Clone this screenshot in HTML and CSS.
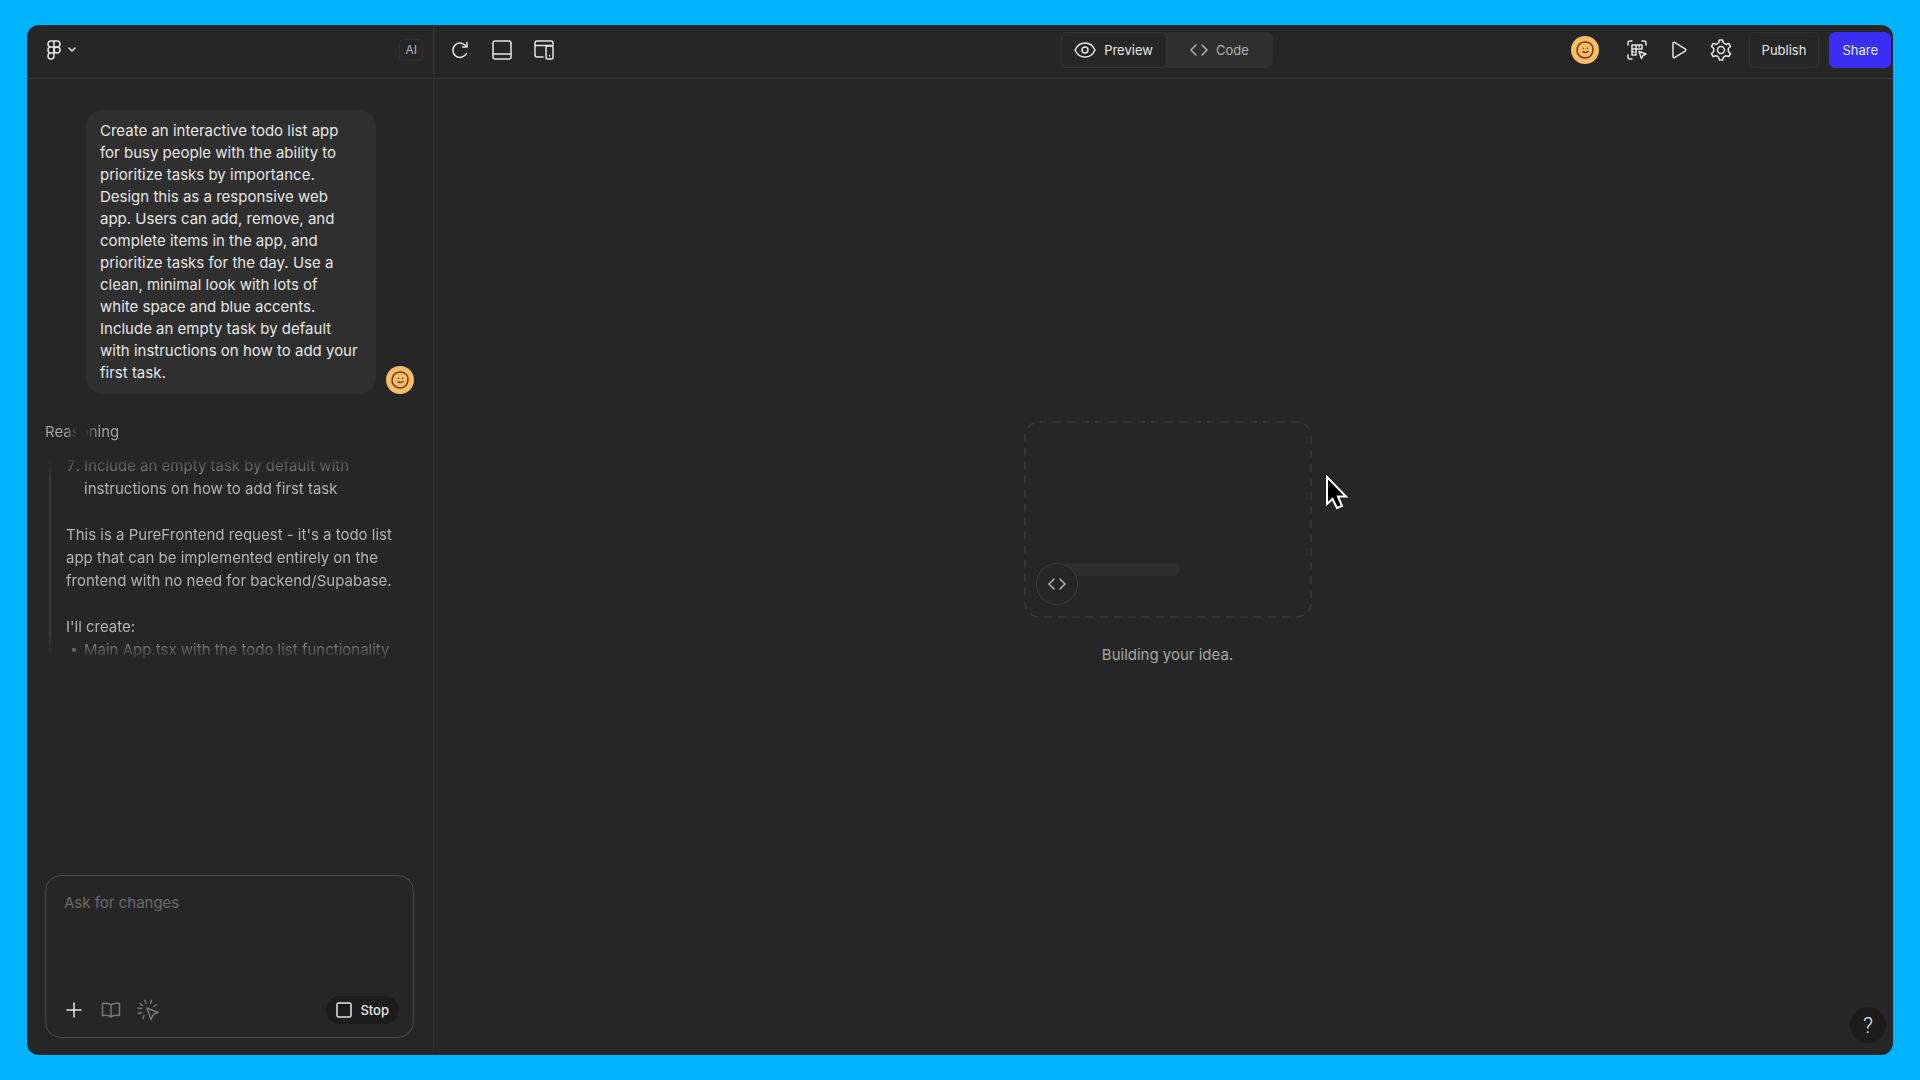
FILE: index.html
```html
<!DOCTYPE html>
<html lang="en">
    <head>
        <meta charset="utf-8">
        <title>Todo list app</title>
        <link rel="stylesheet" href="styles.css">
    </head>
    <body>
        <div class="window">
            <header class="topbar">
                <div class="topbar-side">
                    <button class="menu-button" aria-label="Main menu">
                        <svg width="14" height="20" viewBox="0 0 14 20">
                            <path d="M7 1H4a3 3 0 0 0 0 6h3zM7 1h3a3 3 0 0 1 0 6H7zM7 7H4a3 3 0 0 0 0 6h3zM4 13a3 3 0 1 0 3 3v-3z"/>
                            <circle cx="10" cy="10" r="3"/>
                        </svg>
                        <svg width="8" height="6" viewBox="0 0 8 6"><path d="M1 1l3 3 3-3"/></svg>
                    </button>
                    <span class="ai-badge">AI</span>
                </div>
                <div class="topbar-main">
                    <div class="tools">
                        <button class="icon-button" aria-label="Reload">
                            <svg width="20" height="20" viewBox="0 0 20 20"><path d="M16.500 13.500A7.200 7.200 0 1 1 16.500 7M17 2.500V7h-4.500"/></svg>
                        </button>
                        <button class="icon-button" aria-label="Console">
                            <svg width="20" height="20" viewBox="0 0 20 20"><rect x="1" y="1" width="18" height="18" rx="2"/><path d="M1 14h18"/></svg>
                        </button>
                        <button class="icon-button" aria-label="Screen size">
                            <svg width="20" height="20" viewBox="0 0 20 20"><path d="M9 17H3a2 2 0 0 1-2-2V3a2 2 0 0 1 2-2h14a2 2 0 0 1 2 2v1M1 5.500h18"/><rect x="12" y="6" width="7" height="13" rx="1.500"/><path d="M15.500 15.500v.5"/></svg>
                        </button>
                    </div>
                    <div class="toggle">
                        <button class="toggle-item active">
                            <svg width="22" height="16" viewBox="0 0 22 16"><path d="M1 8c2-4.500 5.500-7 10-7s8 2.500 10 7c-2 4.500-5.500 7-10 7S3 12.500 1 8z"/><circle cx="11" cy="8" r="3"/></svg>
                            Preview
                        </button>
                        <button class="toggle-item">
                            <svg width="18" height="12" viewBox="0 0 18 12"><path d="M6 1L1 6l5 5M12 1l5 5-5 5"/></svg>
                            Code
                        </button>
                    </div>
                    <div class="actions">
                        <span class="avatar">
                            <svg width="18" height="18" viewBox="0 0 18 18"><path d="M9 1c5 0 8 3 8 7.500S14 17 9.500 17 1 14 1 9.500 4 1 9 1z"/><path d="M7.500 7.200v.4M11.500 7.200v.4M7 11q2.500 1 5-.3"/></svg>
                        </span>
                        <div class="tools">
                            <button class="icon-button" aria-label="Copy design">
                                <svg width="20" height="20" viewBox="0 0 20 20"><path d="M1 5V3a2 2 0 0 1 2-2h2M15 1h2a2 2 0 0 1 2 2v2M1 15v2a2 2 0 0 0 2 2h2M5 5h10v4H9v6H5zM5 9h4V5M12 5v2M5 12h2M12 11.500l7 2.500-3 1.500-1.500 3z"/></svg>
                            </button>
                            <button class="icon-button" aria-label="Present">
                                <svg width="20" height="20" viewBox="0 0 20 20"><path d="M4 3.200v13.600a1 1 0 0 0 1.500.8l11-6.800a1 1 0 0 0 0-1.600l-11-6.800A1 1 0 0 0 4 3.200z"/></svg>
                            </button>
                            <button class="icon-button" aria-label="Settings">
                                <svg width="22" height="22" viewBox="0 0 22 22"><path d="M9.400 1h3.200l.8 2.900 2.500 1.400 2.900-.8 1.700 2.900-2.200 2.100v3l2.200 2.100-1.700 2.900-2.900-.8-2.500 1.400-.8 2.900H9.400l-.8-2.900-2.500-1.400-2.900.8-1.700-2.900 2.200-2.100v-3L1.500 7.400l1.700-2.900 2.900.8 2.500-1.400z"/><circle cx="11" cy="11" r="3.500"/></svg>
                            </button>
                        </div>
                        <button class="button">Publish</button>
                        <button class="button primary">Share</button>
                    </div>
                </div>
            </header>

            <div class="content">
                <aside class="sidebar">
                    <div class="message">
                        <p class="bubble">Create an interactive todo list app<br>for busy people with the ability to<br>prioritize tasks by importance.<br>Design this as a responsive web<br>app. Users can add, remove, and<br>complete items in the app, and<br>prioritize tasks for the day. Use a<br>clean, minimal look with lots of<br>white space and blue accents.<br>Include an empty task by default<br>with instructions on how to add your<br>first task.</p>
                        <span class="avatar">
                            <svg width="18" height="18" viewBox="0 0 18 18"><path d="M9 1c5 0 8 3 8 7.500S14 17 9.500 17 1 14 1 9.500 4 1 9 1z"/><path d="M7.500 7.200v.4M11.500 7.200v.4M7 11q2.500 1 5-.3"/></svg>
                        </span>
                    </div>
                    <div class="reasoning-title">Reasoning</div>
                    <div class="reasoning">
                        <ol start="7">
                            <li>Include an empty task by default with<br>instructions on how to add first task</li>
                        </ol>
                        <p>This is a PureFrontend request - it's a todo list<br>app that can be implemented entirely on the<br>frontend with no need for backend/Supabase.</p>
                        <p>I'll create:</p>
                        <ul>
                            <li>Main App.tsx with the todo list functionality</li>
                        </ul>
                    </div>
                    <form class="composer">
                        <textarea placeholder="Ask for changes" aria-label="Ask for changes"></textarea>
                        <div class="composer-bar">
                            <button type="button" class="composer-icon bright" aria-label="Attach">
                                <svg width="20" height="20" viewBox="0 0 20 20"><path d="M10 3v14M3 10h14"/></svg>
                            </button>
                            <button type="button" class="composer-icon" aria-label="Libraries">
                                <svg width="20" height="20" viewBox="0 0 20 20"><path d="M10 5C8.500 3.300 5 3 1.500 3.500v12C5 15 8.500 15.300 10 17c1.500-1.700 5-2 8.500-1.500v-12C15 3 11.500 3.300 10 5zM10 5v12"/></svg>
                            </button>
                            <button type="button" class="composer-icon" aria-label="Point and edit">
                                <svg width="22" height="22" viewBox="0 0 22 22"><path d="M10 9l11 4.500-4.800 2L14 20.500zM8 1.500l1 3M14.500 1.500l-1 3M3 4.500l2.500 2M19.500 5.500L17 7.500M1 9l3.500.5M1.500 14.500l3-1M7 16.500l-1 3"/></svg>
                            </button>
                            <button type="button" class="stop">
                                <svg width="16" height="16" viewBox="0 0 16 16"><rect x="1" y="1" width="14" height="14" rx="1.500"/></svg>
                                Stop
                            </button>
                        </div>
                    </form>
                </aside>

                <main class="stage">
                    <div class="placeholder">
                        <svg class="outline" width="288" height="197" viewBox="0 0 288 197"><rect x="1" y="1" width="286" height="195" rx="14"/></svg>
                        <span class="code-badge">
                            <svg width="18" height="12" viewBox="0 0 18 12"><path d="M6 1L1 6l5 5M12 1l5 5-5 5"/></svg>
                        </span>
                        <span class="skeleton"></span>
                        <svg class="pointer" width="24" height="36" viewBox="0 0 24 36"><path d="M2 2v27l5.500-5 4.500 9 5-2-4-9.500h8z"/></svg>
                    </div>
                    <p class="status">Building your idea.</p>
                    <button class="help" aria-label="Help">?</button>
                </main>
            </div>
        </div>
    </body>
</html>
```
FILE: styles.css
```css
* {
    box-sizing: border-box;
}
body {
    display: flex;
    height: 100vh;
    margin: 0;
    padding: 25px 27px;
    background-color: #00b3ff;
    font-family: Inter, sans-serif;
    font-size: 15px;
    color: #e6e6e6;
}
p, ol, ul {
    margin: 0;
    padding: 0;
}
button {
    display: flex;
    align-items: center;
    justify-content: center;
    padding: 0;
    border: none;
    background: none;
    font-family: inherit;
    font-size: 13px;
    color: inherit;
    cursor: pointer;
}
svg {
    display: block;
    flex: none;
    fill: none;
    stroke: currentColor;
    stroke-width: 1.5;
    stroke-linecap: round;
    stroke-linejoin: round;
}

.window {
    flex: 1;
    display: flex;
    flex-direction: column;
    overflow: hidden;
    border-radius: 12px;
    background-color: #262626;
}

/* top bar */
.topbar {
    display: flex;
    height: 54px;
    border-bottom: 1px solid #353535;
}
.topbar-side {
    display: flex;
    align-items: center;
    justify-content: space-between;
    width: 407px;
    padding: 0 10px 4px 20px;
    border-right: 1px solid #353535;
}
.menu-button {
    gap: 7px;
}
.ai-badge {
    padding: 0 5px;
    border: 1px solid #303030;
    border-radius: 4px;
    font-size: 12px;
    line-height: 20px;
    color: #b0b0b0;
}
.topbar-main {
    flex: 1;
    display: grid;
    grid-template-columns: 1fr auto 1fr;
    align-items: center;
    padding: 0 2px 4px 8px;
}
.tools {
    display: flex;
    gap: 6px;
}
.icon-button {
    width: 36px;
    height: 36px;
}
.toggle {
    display: flex;
    border-radius: 6px;
    background-color: #2f2f2f;
}
.toggle-item {
    gap: 8px;
    width: 106px;
    height: 36px;
    border-radius: 6px;
    color: #b0b0b0;
}
.toggle-item.active {
    border: 1px solid #343434;
    background-color: #262626;
    color: #e6e6e6;
}
.actions {
    display: flex;
    align-items: center;
    justify-content: flex-end;
    gap: 10px;
}
.actions .avatar {
    margin-right: 10px;
}
.button {
    height: 36px;
    padding: 0 12px;
    border: 1px solid #303030;
    border-radius: 6px;
}
.button.primary {
    border-color: #3a2ef5;
    background-color: #3a2ef5;
}
.avatar {
    display: flex;
    align-items: center;
    justify-content: center;
    flex: none;
    width: 28px;
    height: 28px;
    border-radius: 50%;
    background-color: #fbbc68;
    color: #6b3d0c;
}

/* chat */
.content {
    flex: 1;
    display: flex;
    min-height: 0;
}
.sidebar {
    display: flex;
    flex-direction: column;
    width: 407px;
    padding: 31px 19px 17px 18px;
    border-right: 1px solid #303030;
}
.message {
    display: flex;
    justify-content: flex-end;
    align-items: flex-end;
    gap: 10px;
}
.bubble {
    width: 290px;
    padding: 10px 14px;
    border-radius: 16px;
    background-color: #2f2f2f;
    line-height: 22px;
    white-space: nowrap;
}
.reasoning-title {
    align-self: flex-start;
    margin: 27px 0 11px;
    line-height: 22px;
    background: linear-gradient(90deg, #a6a6a6 20px, #262626 32px, #262626 40px, #a6a6a6 54px);
    background-clip: text;
    -webkit-background-clip: text;
    color: transparent;
}
.reasoning {
    margin-left: 4px;
    padding-left: 15px;
    border-left: 2px solid #3a3a3a;
    line-height: 23px;
    color: #b3b3b3;
    white-space: nowrap;
    -webkit-mask-image: linear-gradient(transparent 2px, #000 28px, #000 180px, transparent);
    mask-image: linear-gradient(transparent 2px, #000 28px, #000 180px, transparent);
}
.reasoning ol {
    padding-left: 18px;
}
.reasoning ul {
    padding-left: 6px;
    list-style: none;
}
.reasoning ul li {
    display: flex;
    align-items: center;
    gap: 8px;
}
.reasoning ul li::before {
    content: "";
    width: 4px;
    height: 4px;
    border-radius: 1px;
    background-color: #b3b3b3;
}
.reasoning ol + p, .reasoning p + p {
    margin-top: 23px;
}
.composer {
    display: flex;
    flex-direction: column;
    height: 163px;
    margin-top: auto;
    padding: 16px 14px 13px 18px;
    border: 1px solid #4a4a4a;
    border-radius: 16px;
}
.composer textarea {
    flex: 1;
    padding: 0;
    border: none;
    outline: none;
    resize: none;
    background: none;
    font-family: inherit;
    font-size: 15px;
    line-height: 22px;
    color: #e6e6e6;
}
.composer textarea::placeholder {
    color: #6b6b6b;
}
.composer-bar {
    display: flex;
    align-items: center;
    gap: 17px;
}
.composer-icon {
    width: 20px;
    color: #777;
}
.composer-icon.bright {
    color: #e6e6e6;
}
.stop {
    gap: 8px;
    height: 28px;
    margin-left: auto;
    padding: 0 10px;
    border-radius: 14px;
    background-color: #1c1c1c;
    font-weight: 500;
}

/* preview */
.stage {
    position: relative;
    flex: 1;
    display: flex;
    flex-direction: column;
    align-items: center;
    justify-content: center;
    padding: 0 0 47px 8px;
}
.placeholder {
    position: relative;
    display: flex;
    align-items: flex-end;
    width: 288px;
    height: 197px;
    padding: 13px 12px;
}
.outline {
    position: absolute;
    top: 0;
    left: 0;
    stroke: #393939;
    stroke-linecap: butt;
    stroke-dasharray: 8 6;
}
.code-badge {
    z-index: 1;
    display: flex;
    align-items: center;
    justify-content: center;
    width: 42px;
    height: 42px;
    border: 1px solid #3a3a3a;
    border-radius: 50%;
    background-color: #262626;
    color: #b3b3b3;
}
.skeleton {
    width: 118px;
    height: 13px;
    margin: 0 0 29px -16px;
    border-radius: 6px;
    background-color: #2d2d2d;
}
.pointer {
    position: absolute;
    top: 54px;
    left: 301px;
    fill: #000;
    stroke: #fff;
    stroke-width: 2;
    stroke-linejoin: miter;
}
.status {
    margin-top: 26px;
    line-height: 22px;
    color: #a6a6a6;
}
.help {
    position: absolute;
    right: 7px;
    bottom: 12px;
    width: 36px;
    height: 36px;
    border-radius: 50%;
    background-color: #1c1c1c;
    font-family: Roboto, sans-serif;
    font-size: 22px;
    font-weight: 300;
}
```
